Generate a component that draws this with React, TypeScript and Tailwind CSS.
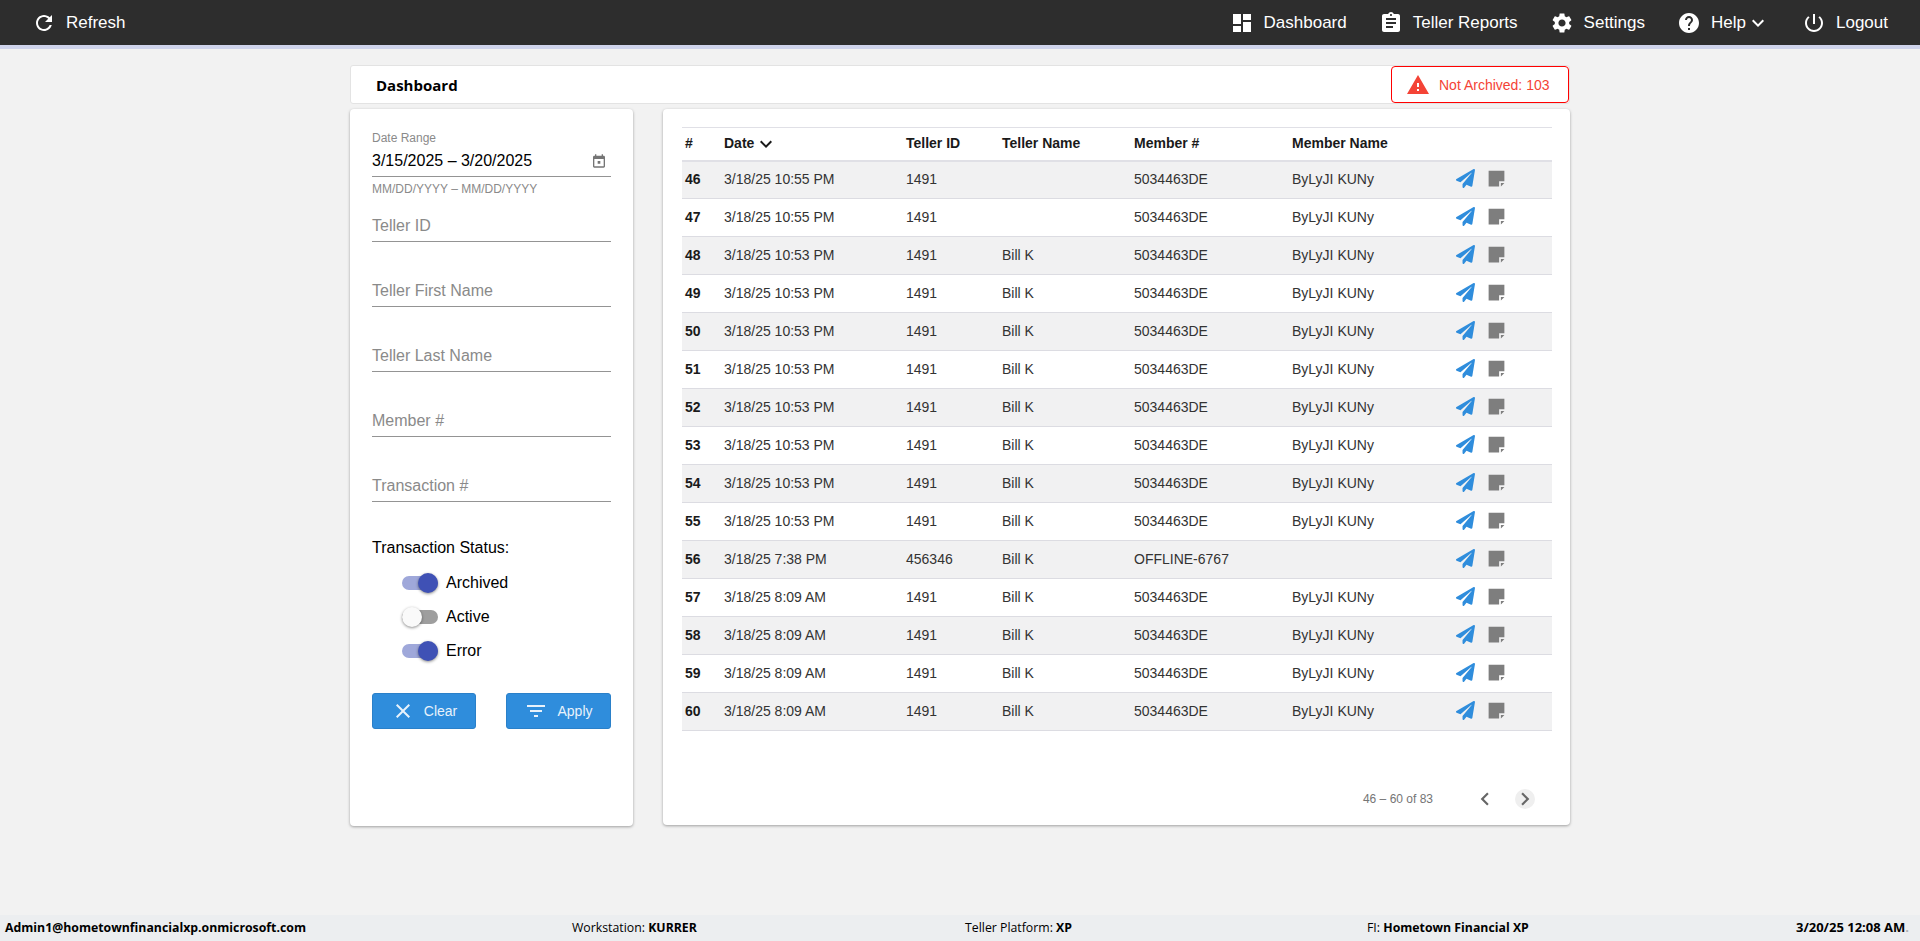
import React from 'react';
import { FaPaperPlane } from 'react-icons/fa';

const paths = {
  refresh: 'M17.65 6.35C16.2 4.9 14.21 4 12 4c-4.42 0-7.99 3.58-7.99 8s3.57 8 7.99 8c3.73 0 6.84-2.55 7.73-6h-2.08c-.82 2.33-3.04 4-5.65 4-3.31 0-6-2.69-6-6s2.69-6 6-6c1.66 0 3.14.69 4.22 1.78L13 11h7V4l-2.35 2.35z',
  dashboard: 'M3 13h8V3H3v10zm0 8h8v-6H3v6zm10 0h8V11h-8v10zm0-18v6h8V3h-8z',
  assignment: 'M19 3h-4.18C14.4 1.84 13.3 1 12 1c-1.3 0-2.4.84-2.82 2H5c-1.1 0-2 .9-2 2v14c0 1.1.9 2 2 2h14c1.1 0 2-.9 2-2V5c0-1.1-.9-2-2-2zm-7 0c.55 0 1 .45 1 1s-.45 1-1 1-1-.45-1-1 .45-1 1-1zm2 14H7v-2h7v2zm3-4H7v-2h10v2zm0-4H7V7h10v2z',
  settings: 'M19.14 12.94c.04-.3.06-.61.06-.94 0-.32-.02-.64-.07-.94l2.03-1.58c.18-.14.23-.41.12-.61l-1.92-3.32c-.12-.22-.37-.29-.59-.22l-2.39.96c-.5-.38-1.03-.7-1.62-.94l-.36-2.54c-.04-.24-.24-.41-.48-.41h-3.84c-.24 0-.43.17-.47.41l-.36 2.54c-.59.24-1.13.57-1.62.94l-2.39-.96c-.22-.08-.47 0-.59.22L2.74 8.87c-.12.21-.08.47.12.61l2.03 1.58c-.05.3-.09.63-.09.94s.02.64.07.94l-2.03 1.58c-.18.14-.23.41-.12.61l1.92 3.32c.12.22.37.29.59.22l2.39-.96c.5.38 1.03.7 1.62.94l.36 2.54c.05.24.24.41.48.41h3.84c.24 0 .44-.17.47-.41l.36-2.54c.59-.24 1.13-.56 1.62-.94l2.39.96c.22.08.47 0 .59-.22l1.92-3.32c.12-.22.07-.47-.12-.61l-2.01-1.58zM12 15.6c-1.98 0-3.6-1.62-3.6-3.6s1.62-3.6 3.6-3.6 3.6 1.62 3.6 3.6-1.62 3.6-3.6 3.6z',
  help: 'M12 2C6.48 2 2 6.48 2 12s4.48 10 10 10 10-4.48 10-10S17.52 2 12 2zm1 17h-2v-2h2v2zm2.07-7.75l-.9.92C13.45 12.9 13 13.5 13 15h-2v-.5c0-1.1.45-2.1 1.17-2.83l1.24-1.26c.37-.36.59-.86.59-1.41 0-1.1-.9-2-2-2s-2 .9-2 2H8c0-2.21 1.79-4 4-4s4 1.79 4 4c0 .88-.36 1.68-.93 2.25z',
  expand: 'M16.59 8.59L12 13.17 7.41 8.59 6 10l6 6 6-6z',
  power: 'M13 3h-2v10h2V3zm4.83 2.17l-1.42 1.42C17.99 7.86 19 9.81 19 12c0 3.87-3.13 7-7 7s-7-3.13-7-7c0-2.19 1.01-4.14 2.58-5.42L6.17 5.17C4.23 6.82 3 9.26 3 12c0 4.97 4.03 9 9 9s9-4.03 9-9c0-2.74-1.23-5.18-3.17-6.83z',
  warning: 'M1 21h22L12 2 1 21zm12-3h-2v-2h2v2zm0-4h-2v-4h2v4z',
  calendar: 'M19 4h-1V2h-2v2H8V2H6v2H5c-1.1 0-2 .9-2 2v14c0 1.1.9 2 2 2h14c1.1 0 2-.9 2-2V6c0-1.1-.9-2-2-2zm0 16H5V9h14v11zm-9-8h4v4h-4v-4z',
  close: 'M19 6.41L17.59 5 12 10.59 6.41 5 5 6.41 10.59 12 5 17.59 6.41 19 12 13.41 17.59 19 19 17.59 13.41 12z',
  filter: 'M10 18h4v-2h-4v2zM3 6v2h18V6H3zm3 7h12v-2H6v2z',
  left: 'M15.41 7.41L14 6l-6 6 6 6 1.41-1.41L10.83 12z',
  right: 'M10 6L8.59 7.41 13.17 12l-4.58 4.59L10 18l6-6z',
  note: 'M3 3h18v12h-6v6H3V3zm14 14h4l-4 4v-4z',
};

const Icon: React.FC<{ name: keyof typeof paths; className?: string }> = ({ name, className }) => (
  <svg viewBox="0 0 24 24" fill="currentColor" className={className}>
    <path d={paths[name]} />
  </svg>
);

const NavItem: React.FC<{ icon: keyof typeof paths; label: string; caret?: boolean; className?: string }> = ({ icon, label, caret, className }) => (
  <div className={`flex items-center text-[17px] text-white ${className ?? ''}`}>
    <Icon name={icon} className="w-[24px] h-[24px] mr-[10px]" />
    <span>{label}</span>
    {caret && <Icon name="expand" className="w-[24px] h-[24px]" />}
  </div>
);

const FilterField: React.FC<{ label: string }> = ({ label }) => (
  <div className="h-[65px] flex flex-col justify-end">
    <div className="border-b border-[#949494] h-[32px] text-[16px] leading-[32px] text-[#8a8a8a]">{label}</div>
  </div>
);

const Toggle: React.FC<{ label: string; on: boolean }> = ({ label, on }) => (
  <div className="flex items-center h-[34px] pl-[30px]">
    <div className="relative w-[36px] h-[14px] mr-[8px]">
      <div className={`w-[36px] h-[14px] rounded-full ${on ? 'bg-[#9fa8da]' : 'bg-[#9e9e9e]'}`} />
      <div className={`absolute top-[-3px] w-[20px] h-[20px] rounded-full shadow-[0_1px_3px_rgba(0,0,0,0.45)] ${on ? 'right-0 bg-[#3f51b5]' : 'left-0 bg-[#fafafa]'}`} />
    </div>
    <span className="text-[16px] text-black">{label}</span>
  </div>
);

const rows = [
  [46, '3/18/25 10:55 PM', '1491', '', '5034463DE', 'ByLyJI KUNy'],
  [47, '3/18/25 10:55 PM', '1491', '', '5034463DE', 'ByLyJI KUNy'],
  [48, '3/18/25 10:53 PM', '1491', 'Bill K', '5034463DE', 'ByLyJI KUNy'],
  [49, '3/18/25 10:53 PM', '1491', 'Bill K', '5034463DE', 'ByLyJI KUNy'],
  [50, '3/18/25 10:53 PM', '1491', 'Bill K', '5034463DE', 'ByLyJI KUNy'],
  [51, '3/18/25 10:53 PM', '1491', 'Bill K', '5034463DE', 'ByLyJI KUNy'],
  [52, '3/18/25 10:53 PM', '1491', 'Bill K', '5034463DE', 'ByLyJI KUNy'],
  [53, '3/18/25 10:53 PM', '1491', 'Bill K', '5034463DE', 'ByLyJI KUNy'],
  [54, '3/18/25 10:53 PM', '1491', 'Bill K', '5034463DE', 'ByLyJI KUNy'],
  [55, '3/18/25 10:53 PM', '1491', 'Bill K', '5034463DE', 'ByLyJI KUNy'],
  [56, '3/18/25 7:38 PM', '456346', 'Bill K', 'OFFLINE-6767', ''],
  [57, '3/18/25 8:09 AM', '1491', 'Bill K', '5034463DE', 'ByLyJI KUNy'],
  [58, '3/18/25 8:09 AM', '1491', 'Bill K', '5034463DE', 'ByLyJI KUNy'],
  [59, '3/18/25 8:09 AM', '1491', 'Bill K', '5034463DE', 'ByLyJI KUNy'],
  [60, '3/18/25 8:09 AM', '1491', 'Bill K', '5034463DE', 'ByLyJI KUNy'],
];

const App: React.FC = () => {
  return (
    <div className="h-[941px] flex flex-col bg-[#f2f2f2] font-['Liberation_Sans',Arial,sans-serif] overflow-hidden">
      <header className="h-[49px] shrink-0 bg-[#2d2d2d] border-b-[4px] border-[#ced3eb] flex items-center pl-[32px]">
        <div className="flex items-center text-[17px] text-white">
          <Icon name="refresh" className="w-[24px] h-[24px] mr-[10px]" />
          <span>Refresh</span>
        </div>
        <div className="ml-auto flex items-center">
          <NavItem icon="dashboard" label="Dashboard" className="mr-[32px]" />
          <NavItem icon="assignment" label="Teller Reports" className="mr-[32px]" />
          <NavItem icon="settings" label="Settings" className="mr-[32px]" />
          <NavItem icon="help" label="Help" caret className="mr-[32px]" />
          <NavItem icon="power" label="Logout" className="mr-[32px]" />
        </div>
      </header>

      <main className="flex-1 w-[1220px] mx-auto pt-[16px]">
        <div className="h-[39px] bg-white rounded-[3px] border border-[#e3e3e3] flex items-center justify-between pl-[25px]">
          <span className="font-['Open_Sans',sans-serif] font-bold text-[15px] text-black pt-[1px]">Dashboard</span>
          <div className="h-[37px] w-[178px] rounded-[4px] border border-[#ff0000] flex items-center pl-[14px] text-[14px] text-[#f44336]">
            <Icon name="warning" className="w-[24px] h-[24px] mr-[9px]" />
            <span className="pt-[1px]">Not Archived: 103</span>
          </div>
        </div>

        <div className="flex gap-[30px] mt-[5px] items-start">
          <aside className="w-[283px] h-[717px] bg-white rounded-[4px] shadow-[0_1px_3px_rgba(0,0,0,0.35)] px-[22px] pt-[22px]">
            <div className="text-[12px] leading-[14px] text-[#8a8a8a]">Date Range</div>
            <div className="border-b border-[#949494] h-[32px] flex items-center justify-between text-[16px] text-black">
              <span>3/15/2025 – 3/20/2025</span>
              <Icon name="calendar" className="w-[16px] h-[16px] text-[#757575] mr-[4px]" />
            </div>
            <div className="text-[12px] leading-[14px] mt-[5px] text-[#8a8a8a]">MM/DD/YYYY – MM/DD/YYYY</div>
            <div className="-mt-[19px]">
              <FilterField label="Teller ID" />
              <FilterField label="Teller First Name" />
              <FilterField label="Teller Last Name" />
              <FilterField label="Member #" />
              <FilterField label="Transaction #" />
            </div>
            <div className="mt-[36px] text-[16px] leading-[20px] text-black">Transaction Status:</div>
            <div className="mt-[8px]">
              <Toggle label="Archived" on />
              <Toggle label="Active" on={false} />
              <Toggle label="Error" on />
            </div>
            <div className="flex justify-between mt-[25px]">
              <button className="w-[104px] h-[36px] bg-[#2f8ddc] border border-[#2a80c9] rounded-[3px] flex items-center justify-center text-[14px] text-[#e8f2fb]">
                <Icon name="close" className="w-[24px] h-[24px] mr-[9px]" />
                Clear
              </button>
              <button className="w-[105px] h-[36px] bg-[#2f8ddc] border border-[#2a80c9] rounded-[3px] flex items-center justify-center text-[14px] text-[#e8f2fb]">
                <Icon name="filter" className="w-[24px] h-[24px] mr-[9px]" />
                Apply
              </button>
            </div>
          </aside>

          <section className="w-[907px] h-[716px] bg-white rounded-[4px] shadow-[0_1px_3px_rgba(0,0,0,0.35)] pt-[18px] px-[19px]">
            <table className="w-[870px] table-fixed border-t-[1px] border-[#e0e0e6] text-[14px] text-[#333]">
              <colgroup>
                <col className="w-[41px]" />
                <col className="w-[183px]" />
                <col className="w-[96px]" />
                <col className="w-[132px]" />
                <col className="w-[158px]" />
                <col className="w-[163px]" />
                <col />
              </colgroup>
              <thead>
                <tr className="h-[33px] border-b-2 border-[#e0e0e6] text-left text-[#1a1a1a]">
                  <th className="pl-[3px] font-bold">#</th>
                  <th className="pl-[1px] font-bold">
                    <span className="inline-flex items-center">
                      Date
                      <Icon name="expand" className="w-[24px] h-[24px] text-[#1a1a1a]" />
                    </span>
                  </th>
                  <th className="font-bold">Teller ID</th>
                  <th className="font-bold">Teller Name</th>
                  <th className="font-bold">Member #</th>
                  <th className="font-bold">Member Name</th>
                  <th />
                </tr>
              </thead>
              <tbody>
                {rows.map((r, i) => (
                  <tr key={r[0]} className={`h-[38px] border-b border-[#dcdce2] ${i % 2 === 0 ? 'bg-[#f1f1f2]' : 'bg-white'}`}>
                    <td className="pl-[3px] font-bold text-[#1a1a1a]">{r[0]}</td>
                    <td className="pl-[1px]">{r[1]}</td>
                    <td>{r[2]}</td>
                    <td>{r[3]}</td>
                    <td>{r[4]}</td>
                    <td>{r[5]}</td>
                    <td>
                      <div className="flex items-center pl-[1px] pb-[2px]">
                        <FaPaperPlane className="w-[19px] h-[19px] text-[#2f8ddc]" />
                        <Icon name="note" className="w-[21px] h-[21px] text-[#7e7e7e] ml-[11px]" />
                      </div>
                    </td>
                  </tr>
                ))}
              </tbody>
            </table>
            <div className="flex items-center justify-end mt-[55px] pr-[16px]">
              <span className="text-[12px] text-[#757575] mr-[39px]">46 – 60 of 83</span>
              <Icon name="left" className="w-[26px] h-[26px] text-[#666] mr-[17px]" />
              <div className="w-[20px] h-[20px] rounded-full bg-[#efefef] flex items-center justify-center">
                <Icon name="right" className="w-[26px] h-[26px] shrink-0 text-[#666]" />
              </div>
            </div>
          </section>
        </div>
      </main>

      <footer className="h-[26px] shrink-0 bg-[#eceef0] grid grid-cols-[1fr_auto] items-center font-['Open_Sans',sans-serif] text-[12.3px] text-black pl-[5px] pr-[11px]">
        <div className="flex items-center">
          <span className="font-bold w-[567px]">Admin1@hometownfinancialxp.onmicrosoft.com</span>
          <span className="w-[393px]">Workstation: <b>KURRER</b></span>
          <span className="w-[402px]">Teller Platform: <b>XP</b></span>
          <span>FI: <b>Hometown Financial XP</b></span>
        </div>
        <span className="font-bold text-[13px]">3/20/25 12:08 AM<span className="text-[#b0b0b0]">.</span></span>
      </footer>
    </div>
  );
};

export default App;
